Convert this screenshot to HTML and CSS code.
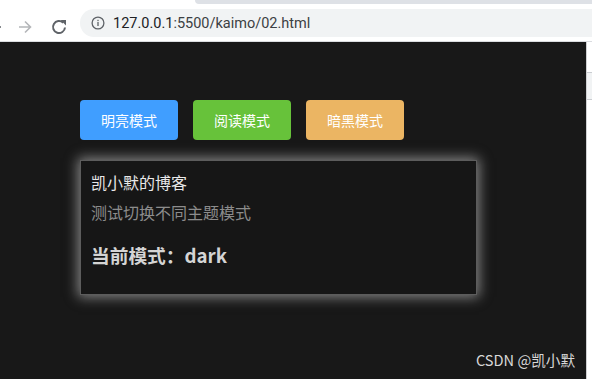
FILE: index.html
```html
<!DOCTYPE html>
<html lang="zh-CN">
<head>
<meta charset="UTF-8">
<meta name="viewport" content="width=device-width, initial-scale=1.0">
<title>主题切换</title>
<link rel="stylesheet" href="styles.css">
</head>
<body>
<div class="tabstrip"><div class="tab-bg"></div></div>
<div class="toolbar">
<svg class="nav-icon back" width="16" height="16" viewBox="0 0 16 16"><path d="M14 8H3M8 3L3 8l5 5" fill="none" stroke="#5f6368" stroke-width="1.6"/></svg>
<svg class="nav-icon fwd" width="16" height="16" viewBox="0 0 16 16"><path d="M2 8h11.5M8 2.5L13.5 8 8 13.5" fill="none" stroke="#b4b6b9" stroke-width="1.6"/></svg>
<svg class="nav-icon reload" width="16" height="16" viewBox="0 0 16 16"><path d="M14 8.5a6 6 0 1 1-1.8-4.8" fill="none" stroke="#5f6368" stroke-width="2"/><path d="M9.6 1h5.4v5.4z" fill="#5f6368"/></svg>
<div class="omnibox">
<svg class="info-icon" width="14" height="14" viewBox="0 0 14 14"><circle cx="7" cy="7" r="5.9" fill="none" stroke="#5f6368" stroke-width="1.3"/><rect x="6.35" y="6" width="1.3" height="4" fill="#5f6368"/><rect x="6.35" y="3.8" width="1.3" height="1.3" fill="#5f6368"/></svg>
<span class="url"><span class="host">127.0.0.1</span>:5500/kaimo/02.html</span>
</div>
</div>

<div class="main">
<div class="page">
<div class="btn-row">
<button class="btn btn-light">明亮模式</button>
<button class="btn btn-read">阅读模式</button>
<button class="btn btn-dark">暗黑模式</button>
</div>
<div class="card">
<div class="card-title">凯小默的博客</div>
<p class="card-desc">测试切换不同主题模式</p>
<h3 class="card-mode">当前模式：dark</h3>
</div>
<div class="watermark">CSDN @凯小默</div>
</div>
<div class="devtools">
<div class="devtools-top"></div>
<div class="devtools-tabs"></div>
</div>
</div>
</body>
</html>
```

FILE: styles.css
```css
* {
box-sizing: border-box;
}

body {
margin: 0;
width: 592px;
height: 379px;
overflow: hidden;
font-family: "Noto Sans CJK SC", sans-serif;
background: #fff;
}

/* browser chrome */
.tabstrip {
height: 4px;
background: #fff;
}

.tab-bg {
margin-left: 195px;
height: 4px;
background: #dee1e6;
border-bottom-left-radius: 4px;
}

.toolbar {
height: 38px;
display: flex;
align-items: flex-start;
border-bottom: 1px solid #dadce0;
background: #fff;
}

.nav-icon {
margin-top: 15px;
}

.back {
margin-left: -13px;
}

.fwd {
margin-left: 14px;
}

.reload {
margin-left: 18px;
}

.omnibox {
margin-top: 5px;
margin-left: 13px;
flex: 1;
height: 28px;
border-radius: 14px 0 0 14px;
background: #f1f3f4;
display: flex;
align-items: center;
padding-left: 11px;
}

.info-icon {
flex: none;
}

.url {
margin-left: 8px;
font-family: Roboto, "Noto Sans", sans-serif;
font-size: 14.5px;
color: #3c4043;
}

.host {
color: #202124;
}

/* page area */
.main {
display: flex;
height: 337px;
}

.page {
position: relative;
flex: 1;
background: #181818;
padding: 58px 0 0 80px;
}

.btn-row {
display: flex;
gap: 15px;
}

.btn {
width: 98px;
height: 40px;
border: none;
border-radius: 4px;
color: #fff;
font-family: "Noto Sans CJK SC", sans-serif;
font-size: 14px;
padding: 0;
cursor: pointer;
}

.btn-light {
background: #409eff;
}

.btn-read {
background: #67c23a;
}

.btn-dark {
background: #ebb563;
}

.card {
margin-top: 20px;
width: 397px;
height: 135px;
padding: 10px;
border: 1px solid #5c5c5c;
background: #161616;
box-shadow: 0 0 12px 2px rgba(210, 210, 210, 0.6);
}

.card-title {
font-size: 16px;
line-height: 24px;
margin-top: -1px;
color: #e8e8e8;
}

.card-desc {
margin: 6px 0 0;
font-size: 16px;
line-height: 24px;
color: #8c8c8c;
}

.card-mode {
margin: 19px 0 0;
font-size: 18.72px;
line-height: 24px;
font-weight: bold;
color: #d4d4d4;
}

.watermark {
position: absolute;
right: 11px;
bottom: 9px;
font-size: 14.6px;
color: #d8d8d8;
}

.devtools {
width: 6px;
border-left: 1px solid #cfd0d2;
background: #fff;
}

.devtools-top {
height: 30px;
}

.devtools-tabs {
height: 28px;
background: #f1f3f4;
border-top: 1px solid #cacdd1;
border-bottom: 1px solid #cacdd1;
}
```
